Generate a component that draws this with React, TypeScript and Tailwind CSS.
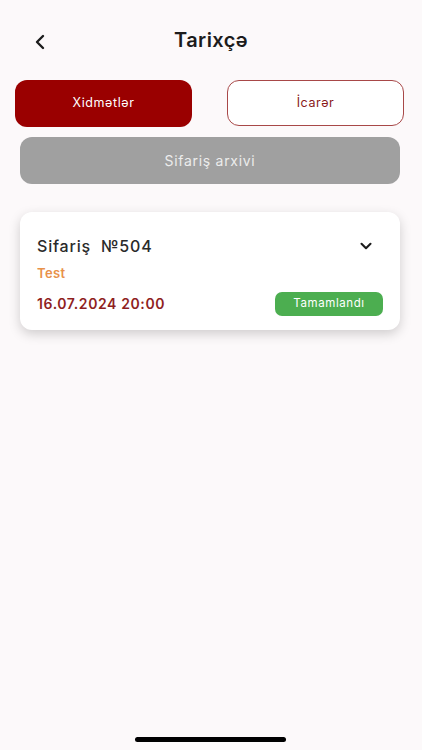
import { ChevronLeft, ChevronDown } from "lucide-react";

export default function App() {
  return (
    <div
      className="relative flex h-[750px] w-[422px] flex-col bg-[#fcf9fa] text-[#1c1c1c]"
      style={{ fontFamily: "Inter, 'Noto Sans', sans-serif" }}
    >
      {/* header */}
      <div className="relative flex h-[80px] items-center justify-center">
        <ChevronLeft className="absolute left-[28px] top-[30px] size-[24px] text-[#1c1c1c]" strokeWidth={2.4} />
        <h1 className="text-[20px] font-semibold tracking-[0.4px]">Tarixçə</h1>
      </div>

      <div className="flex gap-[35px] px-[15px]">
        <button className="h-[47px] w-[177px] rounded-[12px] bg-[#9a0000] text-[12.5px] font-normal tracking-[0.6px] text-white">
          Xidmətlər
        </button>
        <button className="h-[46px] w-[177px] rounded-[12px] border border-[#a84848] bg-white text-[12.5px] font-normal tracking-[0.6px] text-[#8a1a1a]">
          İcarər
        </button>
      </div>

      <div className="mt-[10px] pl-[20px] pr-[22px]">
        <div className="flex h-[47px] items-center justify-center rounded-[12px] bg-[#a0a0a0] text-[14px] font-normal tracking-[0.7px] text-[#ececec]">
          Sifariş arxivi
        </div>
      </div>

      <div className="mt-[28px] pl-[20px] pr-[22px]">
        <div className="rounded-[12px] bg-white px-[17px] pb-[14px] pt-[22px] shadow-[0_4px_12px_rgba(0,0,0,0.18)]">
          <div className="flex items-center justify-between">
            <span className="text-[16px] font-medium tracking-[0.8px] text-[#2a2a2a]">Sifariş&nbsp; №504</span>
            <ChevronDown className="mr-[8px] size-[18px] text-[#1c1c1c]" strokeWidth={2.8} />
          </div>
          <div className="mt-[6px] text-[13px] font-semibold tracking-[0.4px] text-[#e8914a]">Test</div>
          <div className="mt-[8px] flex items-center justify-between">
            <span className="text-[14px] font-semibold tracking-[0.6px] text-[#8f1f1f]">16.07.2024 20:00</span>
            <span className="flex h-[24px] w-[108px] items-center justify-center rounded-[7px] bg-[#4cae50] text-[11.5px] font-normal tracking-[0.6px] text-white">
              Tamamlandı
            </span>
          </div>
        </div>
      </div>

      <div className="absolute bottom-[8px] left-[135px] h-[5px] w-[151px] rounded-full bg-black" />
    </div>
  );
}
